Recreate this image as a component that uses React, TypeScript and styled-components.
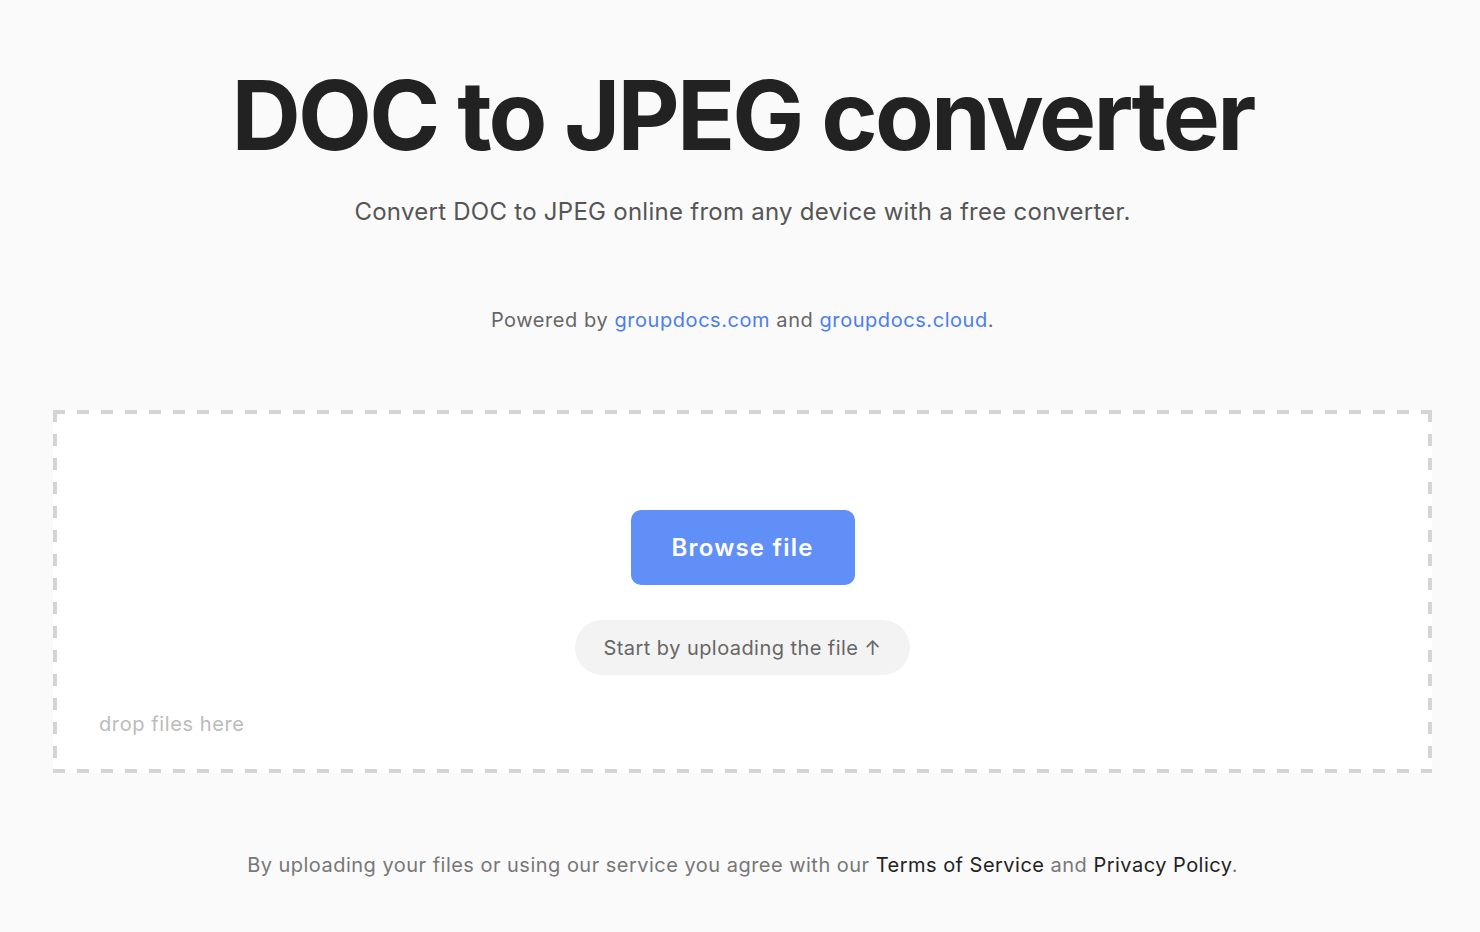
import React from 'react';
import styled, { createGlobalStyle } from 'styled-components';

const GlobalStyle = createGlobalStyle`
  html, body {
    margin: 0;
    padding: 0;
    background: #fafafa;
  }
  body {
    font-family: Inter, "Noto Sans", sans-serif;
    color: #222;
  }
`;

const Page = styled.main`
  display: flex;
  flex-direction: column;
  align-items: center;
  padding: 58px 48px 0 53px;
`;

const Title = styled.h1`
  margin: 0;
  font-size: 96px;
  line-height: 115px;
  font-weight: 700;
  letter-spacing: -0.03em;
  color: #222;
`;

const Subtitle = styled.p`
  margin: 21px 0 0;
  font-size: 24px;
  line-height: 36px;
  letter-spacing: 0.011em;
  color: #555;
`;

const Powered = styled.p`
  margin: 75px 0 0;
  font-size: 20px;
  line-height: 30px;
  letter-spacing: 0.028em;
  color: #666;
`;

const BlueLink = styled.a`
  color: #4b7ef0;
  text-decoration: none;
`;

const dash = '#d4d4d4';

const DropZone = styled.section`
  box-sizing: border-box;
  width: 100%;
  height: 363px;
  margin-top: 75px;
  background-color: #fff;
  background-image:
    linear-gradient(to right, ${dash} 50%, transparent 50%),
    linear-gradient(to right, ${dash} 50%, transparent 50%),
    linear-gradient(to bottom, ${dash} 50%, transparent 50%),
    linear-gradient(to bottom, ${dash} 50%, transparent 50%);
  background-size: 24px 4px, 24px 4px, 4px 24px, 4px 24px;
  background-position: 0 0, 0 100%, 0 0, 100% 0;
  background-repeat: repeat-x, repeat-x, repeat-y, repeat-y;
  display: flex;
  flex-direction: column;
  align-items: center;
  padding-top: 100px;
`;

const BrowseButton = styled.button`
  width: 224px;
  height: 75px;
  border: none;
  border-radius: 10px;
  background: #608ff7;
  color: #fff;
  font-family: inherit;
  font-size: 24px;
  font-weight: 600;
  letter-spacing: 0.05em;
  cursor: pointer;
`;

const Hint = styled.div`
  margin-top: 35px;
  height: 55px;
  padding: 0 29px;
  display: flex;
  align-items: center;
  gap: 6px;
  border-radius: 28px;
  background: #f3f3f3;
  color: #666;
  font-size: 20px;
  letter-spacing: 0.022em;
`;

const DropLabel = styled.div`
  align-self: flex-start;
  margin: 34px 0 0 46px;
  font-size: 20px;
  line-height: 30px;
  letter-spacing: 0.03em;
  color: #bbb;
`;

const Footer = styled.p`
  margin: 77px 0 0;
  font-size: 20px;
  line-height: 30px;
  letter-spacing: 0.024em;
  color: #777;
`;

const DarkLink = styled.a`
  color: #222;
  text-decoration: none;
`;

export default function App() {
  return (
    <>
      <GlobalStyle />
      <Page>
        <Title>DOC to JPEG converter</Title>
        <Subtitle>Convert DOC to JPEG online from any device with a free converter.</Subtitle>
        <Powered>
          Powered by <BlueLink href="#">groupdocs.com</BlueLink> and{' '}
          <BlueLink href="#">groupdocs.cloud</BlueLink>.
        </Powered>

        <DropZone>
          <BrowseButton>Browse file</BrowseButton>
          <Hint>
            Start by uploading the file <span>↑</span>
          </Hint>
          <DropLabel>drop files here</DropLabel>
        </DropZone>

        <Footer>
          By uploading your files or using our service you agree with our{' '}
          <DarkLink href="#">Terms of Service</DarkLink> and{' '}
          <DarkLink href="#">Privacy Policy</DarkLink>.
        </Footer>
      </Page>
    </>
  );
}
